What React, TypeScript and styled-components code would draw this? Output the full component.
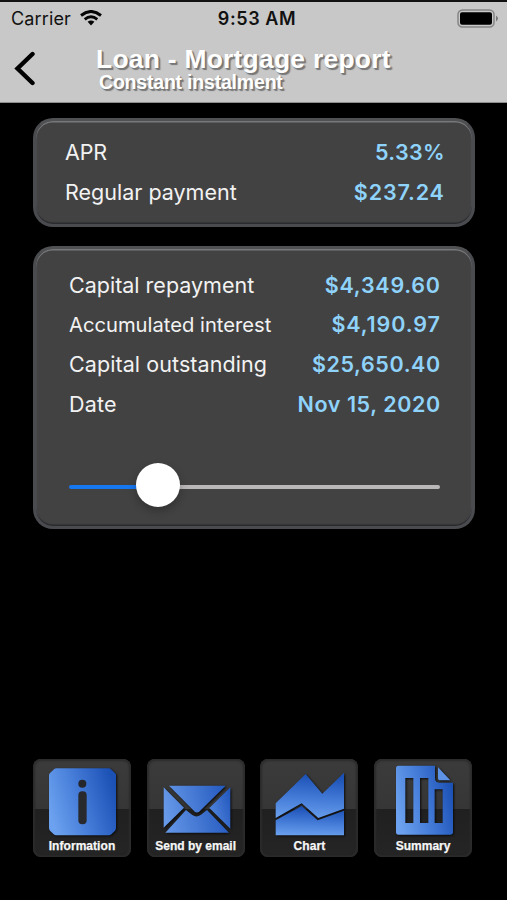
import React from 'react';
import styled, { createGlobalStyle } from 'styled-components';

const GlobalStyle = createGlobalStyle`
  * { box-sizing: border-box; }
  body { margin: 0; background: #000; }
`;

const Screen = styled.main`
  width: 507px;
  height: 900px;
  display: flex;
  flex-direction: column;
  overflow: hidden;
  background: #000;
  font-family: Inter, "Liberation Sans", sans-serif;
  white-space: nowrap;
`;

const Header = styled.header`
  height: 103px;
  border-top: 2px solid #111;
  border-bottom: 1px solid #8d8d8d;
  background: #c8c8c8;
  flex: none;
`;

const StatusBar = styled.div`
  height: 32px;
  padding: 0 8px 0 11px;
  display: grid;
  grid-template-columns: 1fr auto 1fr;
  align-items: center;
  color: #111;
`;

const Carrier = styled.div`
  display: flex;
  align-items: center;
  gap: 9px;
  font-size: 18px;
  letter-spacing: 0.15px;
`;

const Clock = styled.time`
  font-size: 18px;
  font-weight: 600;
  letter-spacing: 0.6px;
  margin-right: -4px;
`;

const Battery = styled.svg`
  justify-self: end;
`;

const NavBar = styled.div`
  height: 68px;
  display: flex;
  padding: 12px 0 0 14px;
`;

const BackButton = styled.button`
  width: 22px;
  height: 36px;
  margin-top: 4px;
  padding: 0;
  border: 0;
  background: none;
`;

const Titles = styled.div`
  margin-left: 60px;
  display: flex;
  flex-direction: column;
  color: #fff;
  font-family: "Liberation Sans", sans-serif;
  font-weight: 700;
  text-shadow: 1px 1px 1px #777, 2px 2px 1px #777;
`;

const Title = styled.h1`
  margin: 0;
  font-size: 26.4px;
  line-height: 26px;
  letter-spacing: 0.27px;
`;

const Subtitle = styled.h2`
  margin: 0 0 0 3px;
  font-size: 19.5px;
  line-height: 20px;
  letter-spacing: -0.2px;
`;

const Card = styled.section<{ $height: number; $top: number; $inset: number; $end: number }>`
  height: ${(p) => p.$height}px;
  margin: 0 32px 0 33px;
  padding: ${(p) => p.$top}px ${(p) => p.$end}px 0 ${(p) => p.$inset}px;
  border-radius: 20px;
  background: #424242;
  border: 3px solid #4a4b4f;
  border-top-color: #505153;
  box-shadow: inset 0 1.5px 0.5px #77787a, inset 0 -1.5px 1px #292a2e, inset 1px 0 1px #505155, inset -1px 0 1px #505155;
  flex: none;
`;

const Panels = styled.div`
  padding-top: 15px;
  display: flex;
  flex-direction: column;
  gap: 19px;
`;

const Row = styled.div`
  height: 39.6px;
  display: flex;
  align-items: center;
  justify-content: space-between;
`;

const Label = styled.span<{ $size?: number; $track?: number }>`
  color: #f2f2f2;
  font-size: ${(p) => p.$size ?? 21.5}px;
  letter-spacing: ${(p) => p.$track ?? 0}px;
`;

const Value = styled.span<{ $track?: number }>`
  color: #8fd3fb;
  font-size: 21.5px;
  font-weight: 600;
  letter-spacing: ${(p) => p.$track ?? 0.75}px;
  margin-right: -0.8px;
`;

const Slider = styled.div`
  height: 44px;
  margin-top: 40px;
  display: grid;
  align-items: center;
`;

const Track = styled.div`
  grid-area: 1 / 1;
  height: 4px;
  margin-top: 3px;
  border-radius: 2px;
  background: linear-gradient(to right, #1677ee 24%, #b9b7b7 24%);
`;

const Thumb = styled.div`
  grid-area: 1 / 1;
  width: 44px;
  height: 44px;
  margin-left: 67px;
  border-radius: 50%;
  background: #fff;
  box-shadow: 0 4px 8px rgba(0, 0, 0, 0.25);
`;

const Toolbar = styled.nav`
  margin: auto 0 43px 33px;
  display: flex;
  gap: 15.7px;
`;

const Tile = styled.button`
  width: 98px;
  height: 98px;
  padding: 0;
  border: 0;
  border-radius: 8px;
  background: linear-gradient(#3b3b3b 0, #363636 51%, #202020 51%, #252525 100%);
  box-shadow: inset 0 0 2px 2px #2c2c2c, inset 0 -2px 2px #1b1b1b;
  display: grid;
  justify-items: center;
`;

const TileArt = styled.svg`
  grid-area: 1 / 1;
  width: 98px;
  height: 98px;
  filter: drop-shadow(1px 1px 1px #0b0b0b);
`;

const TileLabel = styled.span<{ $track: number }>`
  grid-area: 1 / 1;
  align-self: end;
  margin-bottom: 4px;
  color: #f6f6f6;
  font: 700 12px/14px "Liberation Sans", sans-serif;
  letter-spacing: ${(p) => p.$track}px;
  -webkit-text-stroke: 0.25px #f6f6f6;
`;

const blue = (id: string, vertical?: boolean) => (
  <linearGradient id={id} x1="0" y1={vertical ? '1' : '0.6'} x2={vertical ? '0.1' : '1'} y2={vertical ? '0' : '0.3'}>
    <stop offset="0" stopColor="#6ba1ee" />
    <stop offset="0.5" stopColor="#4279d6" />
    <stop offset="1" stopColor="#1b50b4" />
  </linearGradient>
);

const InfoArt = () => (
  <>
    <defs>{blue('info')}</defs>
    <path fill="url(#info)" d="M94 55H251Q255 55 258 58L270 69Q273 72 273 76V234Q273 238 270 242L259 253Q256 256 251 256H94Q89 256 86 253L75 242Q72 238 72 234V76Q72 72 75 69L87 58Q90 55 94 55Z" />
    <circle cx="172" cy="101" r="12" fill="#25272c" />
    <rect x="160" y="124" width="25" height="99" rx="12" fill="#292a2d" />
  </>
);

const MailArt = () => (
  <>
    <defs>
      <linearGradient id="mail" gradientUnits="userSpaceOnUse" x1="81" y1="248" x2="272" y2="190">
        <stop offset="0" stopColor="#6699e8" />
        <stop offset="1" stopColor="#2459bf" />
      </linearGradient>
      <linearGradient id="flap" gradientUnits="userSpaceOnUse" x1="72" y1="150" x2="262" y2="110">
        <stop offset="0" stopColor="#6699e8" />
        <stop offset="1" stopColor="#2459bf" />
      </linearGradient>
      <linearGradient id="side" x1="0" y1="0.8" x2="1" y2="0.2">
        <stop offset="0" stopColor="#5489df" />
        <stop offset="1" stopColor="#2459bf" />
      </linearGradient>
    </defs>
    <path fill="url(#flap)" d="M92 107H262L184 184Q176 191 168 184Z" />
    <path fill="url(#flap)" d="M76 112L137 173L76 233Z" />
    <path fill="url(#side)" d="M276 112L213 174L276 236Z" />
    <path fill="url(#mail)" d="M81 248L143 180L161 194Q176 205 190 193L206 180L272 248Z" />
  </>
);

const ChartArt = () => (
  <>
    <defs>{blue('chart', true)}</defs>
    <path fill="url(#chart)" d="M72 160L162 72L212 131L277 68V176L200 204L150 160L72 204Z" />
    <path fill="url(#chart)" d="M72 211L150 168L198 211L277 182V256H72Z" />
  </>
);

const SummaryArt = () => (
  <>
    <defs>{blue('summary')}</defs>
    <path
      fill="url(#summary)"
      fillRule="evenodd"
      d="M97 47H207V84Q207 98 220 98H261V246Q261 254 253 254H97Q90 254 90 246V55Q90 47 97 47ZM118 84V219H142V84ZM162 84V219H187V84ZM206 118V219H230V118Z"
    />
    <path fill="#5d92e4" d="M216 52L253 91H223Q216 91 216 83Z" />
  </>
);

const actions = [
  { label: 'Information', track: 0.05, box: '24 27 294 294', Art: InfoArt },
  { label: 'Send by email', track: 0, box: '26 27 294 294', Art: MailArt },
  { label: 'Chart', track: 0.1, box: '25 27 294 294', Art: ChartArt },
  { label: 'Summary', track: 0, box: '24 27 294 294', Art: SummaryArt },
];

export default function App() {
  return (
    <Screen>
      <GlobalStyle />
      <Header>
        <StatusBar>
          <Carrier>
            Carrier
            <svg width="22" height="16" viewBox="0 0 22 16" fill="none" stroke="#050505" strokeWidth="2.9">
              <path d="M1 5.5Q11 -2.6 21 5.5" />
              <path d="M4.7 9.3Q11 4.2 17.3 9.3" />
              <path d="M7.6 11.8Q11 9 14.4 11.8L11 15.4Z" fill="#050505" stroke="none" />
            </svg>
          </Carrier>
          <Clock>9:53 AM</Clock>
          <Battery width="42" height="19" viewBox="0 0 42 19">
            <rect x="1" y="1" width="36" height="17" rx="4.5" fill="none" stroke="#858585" strokeWidth="1.5" />
            <rect x="3" y="3.2" width="32" height="12.6" rx="2" fill="#000" />
            <path d="M39 6.5Q43 9.5 39 12.5Z" fill="#777" />
          </Battery>
        </StatusBar>
        <NavBar>
          <BackButton aria-label="Back">
            <svg width="22" height="36" viewBox="0 0 22 36" fill="none" stroke="#000" strokeWidth="4.4">
              <path d="M18.5 4L3.5 18.5L18.5 33" strokeLinecap="round" />
            </svg>
          </BackButton>
          <Titles>
            <Title>Loan - Mortgage report</Title>
            <Subtitle>Constant instalment</Subtitle>
          </Titles>
        </NavBar>
      </Header>
      <Panels>
        <Card $height={109} $top={11.6} $inset={29} $end={28}>
          <Row><Label $track={-0.2}>APR</Label><Value $track={0.3}>5.33%</Value></Row>
          <Row><Label>Regular payment</Label><Value $track={0.85}>$237.24</Value></Row>
        </Card>
        <Card $height={283} $top={16} $inset={33} $end={32}>
          <Row><Label>Capital repayment</Label><Value>$4,349.60</Value></Row>
          <Row><Label $size={20.2} $track={0}>Accumulated interest</Label><Value $track={0.9}>$4,190.97</Value></Row>
          <Row><Label $track={0.08}>Capital outstanding</Label><Value $track={0.6}>$25,650.40</Value></Row>
          <Row><Label $track={0.2}>Date</Label><Value $track={0.6}>Nov 15, 2020</Value></Row>
          <Slider>
            <Track />
            <Thumb />
          </Slider>
        </Card>
      </Panels>
      <Toolbar>
        {actions.map(({ label, track, box, Art }) => (
          <Tile key={label}>
            <TileArt viewBox={box}><Art /></TileArt>
            <TileLabel $track={track}>{label}</TileLabel>
          </Tile>
        ))}
      </Toolbar>
    </Screen>
  );
}
